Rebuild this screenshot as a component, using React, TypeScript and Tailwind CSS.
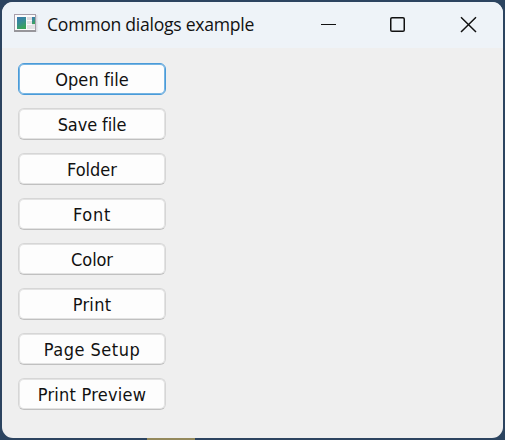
const buttons = [
  { label: "Open file", tracking: "tracking-[0.05px]" },
  { label: "Save file", tracking: "tracking-[-0.1px]" },
  { label: "Folder", tracking: "tracking-[0px]" },
  { label: "Font", tracking: "tracking-[0.7px]" },
  { label: "Color", tracking: "tracking-[-0.1px]" },
  { label: "Print", tracking: "tracking-[0.3px]" },
  { label: "Page Setup", tracking: "tracking-[0.5px]" },
  { label: "Print Preview", tracking: "tracking-[0.25px]" },
];

function AppIcon() {
  return (
    <svg width="24" height="18" viewBox="0 0 24 18" className="shrink-0">
      <defs>
        <linearGradient id="screen" x1="0" y1="0" x2="0.4" y2="1">
          <stop offset="0" stopColor="#3a78b0" />
          <stop offset="0.5" stopColor="#388c96" />
          <stop offset="1" stopColor="#3aa35b" />
        </linearGradient>
      </defs>
      <rect x="0" y="0" width="22" height="18" fill="#a79eaa" />
      <rect x="1" y="1" width="20" height="15" fill="#fbfbfb" />
      <rect x="3" y="3" width="9" height="12" fill="url(#screen)" />
      <rect x="13" y="3" width="5" height="3" fill="#dddcdf" />
      <rect x="13" y="7" width="5" height="3" fill="#e3e2e4" />
      <rect x="13" y="11" width="5" height="4" fill="#e3e2e4" />
      <rect x="18" y="3" width="3" height="7" fill="url(#screen)" />
      <rect x="18" y="10" width="3" height="5" fill="#e3e5e6" />
      <rect x="0" y="16" width="22" height="2" fill="#97969b" />
      <rect x="22" y="1" width="1.5" height="17" fill="#d9dce2" />
    </svg>
  );
}

export default function App() {
  return (
    <div className="h-[440px] w-[505px] overflow-hidden bg-[linear-gradient(90deg,transparent_0_147px,#94895c_147px_195px,transparent_195px),linear-gradient(#2c4460,#2c4460)] bg-[size:100%_2px,100%_100%] bg-[position:bottom,top] bg-no-repeat p-[2px]">
      <div className="flex h-[436px] w-[501px] flex-col overflow-hidden rounded-[11px] bg-[#efefef]">
        <header className="flex h-[46px] shrink-0 items-center bg-[#eef3f8] pl-3">
          <div className="-mt-[4px]">
            <AppIcon />
          </div>
          <h1 className="-mt-[3px] ml-[9px] whitespace-nowrap font-['Open_Sans','Noto_Sans',sans-serif] text-[17.6px] leading-6 tracking-[-0.27px] text-[#111]">
            Common dialogs example
          </h1>
          <svg width="202" height="45" viewBox="301 2 202 45" className="ml-auto shrink-0" fill="none" stroke="#111" strokeWidth="1.5">
            <path d="M321 23.5H336" strokeWidth="1" />
            <rect x="390.75" y="16.75" width="13.5" height="13.5" rx="1.3" />
            <path d="M461 16.2L476 31M476 16.2L461 31" />
          </svg>
        </header>
        <main className="flex flex-col items-start gap-[13px] pl-4 pt-[15px]">
          {buttons.map(({ label, tracking }, i) => (
            <button
              key={label}
              className={`flex h-8 w-[148px] items-center justify-center whitespace-nowrap rounded-[6px] border bg-[#fdfdfd] pt-px font-['DejaVu_Sans_Condensed','DejaVu_Sans',sans-serif] text-[18px] leading-6 text-[#111] ${tracking} ${
                i === 0 ? "border-[#4a9bd9] shadow-[inset_0_0_0_1px_#75b4e2]" : "border-[#d6d6d6] border-b-[#c0c0c0] shadow-[inset_0_0_0_1px_#e3e3e3]"
              }`}
            >
              {label}
            </button>
          ))}
        </main>
      </div>
    </div>
  );
}
